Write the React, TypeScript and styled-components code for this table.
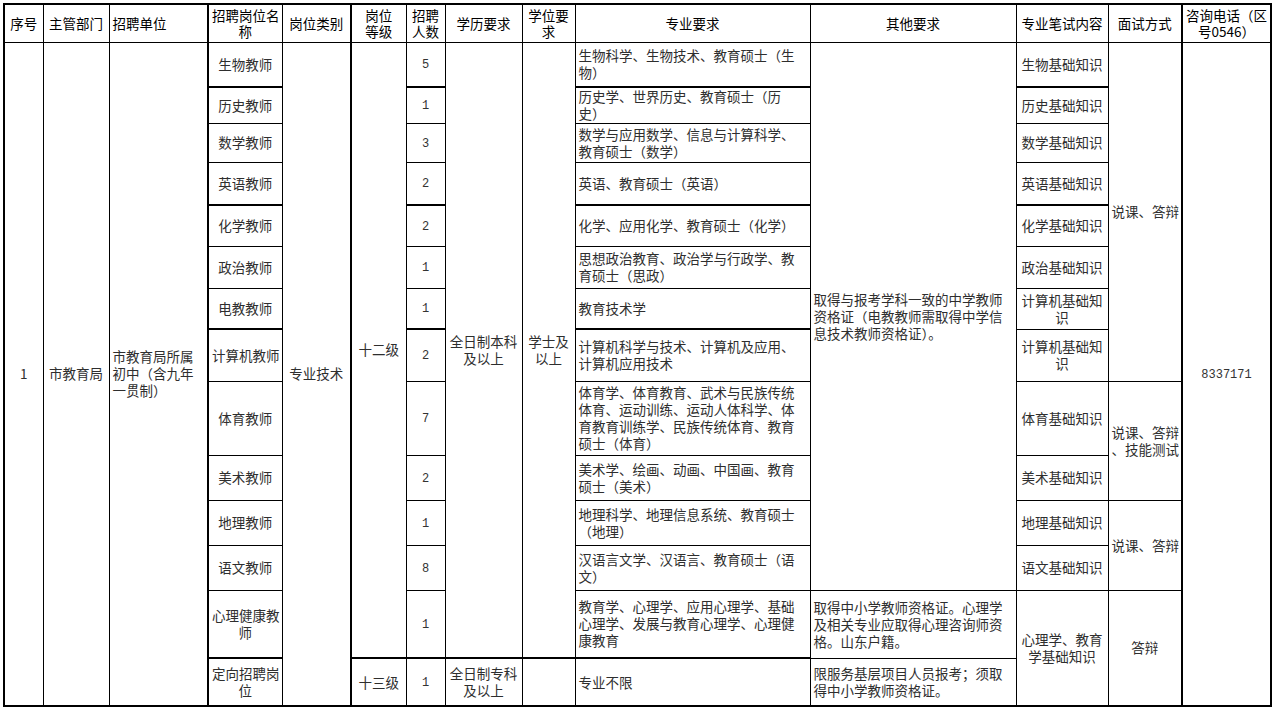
import React from 'react';
import styled, { createGlobalStyle } from 'styled-components';

const GlobalStyle = createGlobalStyle`
  html, body {
    margin: 0;
    padding: 0;
    background: #fff;
  }
  body {
    font-family: "Noto Sans CJK SC", "Noto Sans", sans-serif;
    color: #111;
  }
`;

const COLS = [39, 66, 99, 74, 69, 55, 39, 77, 53, 235, 206, 92, 74, 89];

interface Position {
  name: string[];
  count: string;
  major: string[];
  exam: string[];
  height: number;
  thick?: boolean;
}

const positions: Position[] = [
  { name: ['生物教师'], count: '5', major: ['生物科学、生物技术、教育硕士（生', '物）'], exam: ['生物基础知识'], height: 45, thick: true },
  { name: ['历史教师'], count: '1', major: ['历史学、世界历史、教育硕士（历', '史）'], exam: ['历史基础知识'], height: 36 },
  { name: ['数学教师'], count: '3', major: ['数学与应用数学、信息与计算科学、', '教育硕士（数学）'], exam: ['数学基础知识'], height: 39 },
  { name: ['英语教师'], count: '2', major: ['英语、教育硕士（英语）'], exam: ['英语基础知识'], height: 43, thick: true },
  { name: ['化学教师'], count: '2', major: ['化学、应用化学、教育硕士（化学）'], exam: ['化学基础知识'], height: 41 },
  { name: ['政治教师'], count: '1', major: ['思想政治教育、政治学与行政学、教', '育硕士（思政）'], exam: ['政治基础知识'], height: 42 },
  { name: ['电教教师'], count: '1', major: ['教育技术学'], exam: ['计算机基础知', '识'], height: 41, thick: true },
  { name: ['计算机教师'], count: '2', major: ['计算机科学与技术、计算机及应用、', '计算机应用技术'], exam: ['计算机基础知', '识'], height: 52 },
  { name: ['体育教师'], count: '7', major: ['体育学、体育教育、武术与民族传统', '体育、运动训练、运动人体科学、体', '育教育训练学、民族传统体育、教育', '硕士（体育）'], exam: ['体育基础知识'], height: 74 },
  { name: ['美术教师'], count: '2', major: ['美术学、绘画、动画、中国画、教育', '硕士（美术）'], exam: ['美术基础知识'], height: 45 },
  { name: ['地理教师'], count: '1', major: ['地理科学、地理信息系统、教育硕士', '（地理）'], exam: ['地理基础知识'], height: 45 },
  { name: ['语文教师'], count: '8', major: ['汉语言文学、汉语言、教育硕士（语', '文）'], exam: ['语文基础知识'], height: 45 },
  { name: ['心理健康教', '师'], count: '1', major: ['教育学、心理学、应用心理学、基础', '心理学、发展与教育心理学、心理健', '康教育'], exam: ['心理学、教育', '学基础知识'], height: 68, thick: true },
  { name: ['定向招聘岗', '位'], count: '1', major: ['专业不限'], exam: [], height: 48 },
];

// 面试方式 merges, keyed by the row where they start
const interviews: Record<number, { span: number; lines: string[] }> = {
  0: { span: 8, lines: ['说课、答辩'] },
  8: { span: 2, lines: ['说课、答辩', '、技能测试'] },
  10: { span: 2, lines: ['说课、答辩'] },
  12: { span: 2, lines: ['答辩'] },
};

const Lines = ({ lines }: { lines: string[] }) => (
  <>
    {lines.map((l, i) => (
      <Line key={i}>{l}</Line>
    ))}
  </>
);

export default function App() {
  return (
    <Page>
      <GlobalStyle />
      <Table>
        <colgroup>
          {COLS.map((w, i) => (
            <col key={i} style={{ width: w }} />
          ))}
        </colgroup>
        <thead>
          <tr>
            <Head $h={38}>序号</Head>
            <Head>主管部门</Head>
            <Head $align="left">招聘单位</Head>
            <Head $thickLeft><Lines lines={['招聘岗位名', '称']} /></Head>
            <Head>岗位类别</Head>
            <Head $thickLeft><Lines lines={['岗位', '等级']} /></Head>
            <Head><Lines lines={['招聘', '人数']} /></Head>
            <Head>学历要求</Head>
            <Head><Lines lines={['学位要', '求']} /></Head>
            <Head>专业要求</Head>
            <Head>其他要求</Head>
            <Head>专业笔试内容</Head>
            <Head>面试方式</Head>
            <Head $thickLeft><Lines lines={['咨询电话（区', '号0546）']} /></Head>
          </tr>
        </thead>
        <tbody>
          {positions.map((p, i) => {
            const first = i === 0;
            const last = i === positions.length - 1;
            const iv = interviews[i];
            return (
              <tr key={i}>
                {first && (
                  <>
                    <Cell rowSpan={14}>1</Cell>
                    <Cell rowSpan={14}>市教育局</Cell>
                    <Cell rowSpan={14} $align="left">
                      <Lines lines={['市教育局所属', '初中（含九年', '一贯制）']} />
                    </Cell>
                  </>
                )}
                <Cell $h={p.height} $thickLeft $thickBottom={p.thick}>
                  <Lines lines={p.name} />
                </Cell>
                {first && <Cell rowSpan={14}>专业技术</Cell>}
                {first && (
                  <Cell rowSpan={13} $thickLeft $thickBottom>
                    十二级
                  </Cell>
                )}
                {last && <Cell $thickLeft>十三级</Cell>}
                <Cell $thickBottom={p.thick}>
                  <Digit>{p.count}</Digit>
                </Cell>
                {first && (
                  <>
                    <Cell rowSpan={13} $thickBottom>
                      <Lines lines={['全日制本科', '及以上']} />
                    </Cell>
                    <Cell rowSpan={13} $thickBottom>
                      <Lines lines={['学士及', '以上']} />
                    </Cell>
                  </>
                )}
                {last && (
                  <>
                    <Cell>
                      <Lines lines={['全日制专科', '及以上']} />
                    </Cell>
                    <Cell />
                  </>
                )}
                <Cell $align="left" $thickBottom={p.thick}>
                  <Lines lines={p.major} />
                </Cell>
                {first && (
                  <Cell rowSpan={12} $align="left">
                    <Lines lines={['取得与报考学科一致的中学教师', '资格证（电教教师需取得中学信', '息技术教师资格证）。']} />
                  </Cell>
                )}
                {i === 12 && (
                  <Cell $align="left">
                    <Lines lines={['取得中小学教师资格证。心理学', '及相关专业应取得心理咨询师资', '格。山东户籍。']} />
                  </Cell>
                )}
                {last && (
                  <Cell $align="left">
                    <Lines lines={['限服务基层项目人员报考；须取', '得中小学教师资格证。']} />
                  </Cell>
                )}
                {i < 12 && (
                  <Cell $thickBottom={p.thick && i < 6}>
                    <Lines lines={p.exam} />
                  </Cell>
                )}
                {i === 12 && (
                  <Cell rowSpan={2}>
                    <Lines lines={p.exam} />
                  </Cell>
                )}
                {iv && (
                  <Cell rowSpan={iv.span}>
                    <Lines lines={iv.lines} />
                  </Cell>
                )}
                {first && (
                  <Cell rowSpan={14} $thickLeft>
                    <Digit>8337171</Digit>
                  </Cell>
                )}
              </tr>
            );
          })}
        </tbody>
      </Table>
    </Page>
  );
}

const Page = styled.div`
  padding: 3px 2px 0 3px;
  width: 1268px;
`;

const Table = styled.table`
  border-collapse: collapse;
  table-layout: fixed;
  width: 1267px;
  border: 2px solid #000;
`;

interface CellProps {
  $align?: 'left' | 'center';
  $thickBottom?: boolean;
  $thickLeft?: boolean;
  $h?: number;
}

const Cell = styled.td<CellProps>`
  border: 1px solid #000;
  ${(p) => (p.$thickBottom ? 'border-bottom: 2px solid #000;' : '')}
  ${(p) => (p.$thickLeft ? 'border-left: 2px solid #000;' : '')}
  ${(p) => (p.$h ? `height: ${p.$h}px;` : '')}
  padding: 0 3px;
  box-sizing: border-box;
  text-align: ${(p) => p.$align || 'center'};
  vertical-align: middle;
  font-size: 13.5px;
  line-height: 17px;
  color: #2e2e2e;
  overflow: hidden;
`;

const Head = styled(Cell).attrs({ as: 'th' })`
  font-weight: 400;
  color: #000;
  line-height: 16px;
`;

const Line = styled.div`
  white-space: nowrap;
`;

const Digit = styled.span`
  font-family: "Liberation Mono", "DejaVu Sans Mono", monospace;
  font-size: 12px;
  color: #333;
`;
